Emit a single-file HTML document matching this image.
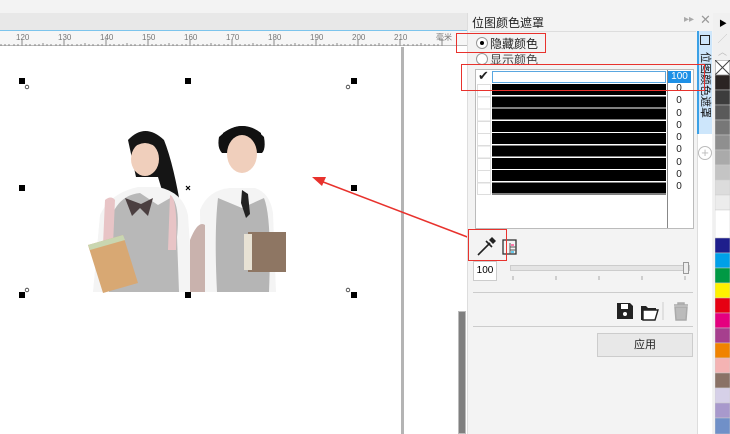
<!DOCTYPE html><html><head><meta charset="utf-8"><style>
*{margin:0;padding:0;box-sizing:border-box}
body{width:730px;height:434px;overflow:hidden;position:relative;background:#fff;font-family:"Liberation Sans","Noto Sans CJK SC",sans-serif}
.a{position:absolute}
.t{font-size:11px;color:#222;white-space:nowrap}
</style></head><body>
<div class="a" style="left:0;top:0;width:730px;height:13px;background:#f3f3f3"></div>
<div class="a" style="left:0;top:13px;width:470px;height:17px;background:#e8e8e8"></div>
<div class="a" style="left:0;top:30px;width:470px;height:1px;background:#7cc4ec"></div>
<div class="a" style="left:0;top:31px;width:470px;height:15px;background:#f6f6f6;border-bottom:1px solid #bbb"></div>
<svg class="a" style="left:0;top:31px" width="470" height="16">
<g font-family="Liberation Sans" font-size="8" fill="#777">
<text x="16" y="9">120</text><text x="58" y="9">130</text><text x="100" y="9">140</text><text x="142" y="9">150</text><text x="184" y="9">160</text><text x="226" y="9">170</text><text x="268" y="9">180</text><text x="310" y="9">190</text><text x="352" y="9">200</text><text x="394" y="9">210</text><text x="436" y="9">毫米</text></g>
<g stroke="#888" stroke-width="1">
<path d="M22 8v7M64 8v7M106 8v7M148 8v7M190 8v7M232 8v7M274 8v7M316 8v7M358 8v7M400 8v7M442 8v7"/>
<path d="M1 13v2M5 13v2M9 13v2M14 13v2M18 13v2M26 13v2M30 13v2M35 13v2M39 13v2M43 12v3M47 13v2M51 13v2M56 13v2M60 13v2M68 13v2M72 13v2M77 13v2M81 13v2M85 12v3M89 13v2M93 13v2M98 13v2M102 13v2M110 13v2M114 13v2M119 13v2M123 13v2M127 12v3M131 13v2M135 13v2M140 13v2M144 13v2M152 13v2M156 13v2M161 13v2M165 13v2M169 12v3M173 13v2M177 13v2M182 13v2M186 13v2M194 13v2M198 13v2M203 13v2M207 13v2M211 12v3M215 13v2M219 13v2M224 13v2M228 13v2M236 13v2M240 13v2M245 13v2M249 13v2M253 12v3M257 13v2M261 13v2M266 13v2M270 13v2M278 13v2M282 13v2M287 13v2M291 13v2M295 12v3M299 13v2M303 13v2M308 13v2M312 13v2M320 13v2M324 13v2M329 13v2M333 13v2M337 12v3M341 13v2M345 13v2M350 13v2M354 13v2M362 13v2M366 13v2M371 13v2M375 13v2M379 12v3M383 13v2M387 13v2M392 13v2M396 13v2M404 13v2M408 13v2M413 13v2M417 13v2M421 12v3M425 13v2M429 13v2M434 13v2M438 13v2"/></g></svg>
<div class="a" style="left:401px;top:47px;width:3px;height:387px;background:#b4b4b4"></div>
<div class="a" style="left:458px;top:311px;width:8px;height:123px;background:#7f7f7f;border:1px solid #bbb"></div>
<svg class="a" style="left:0;top:0" width="400" height="434">
<g fill="#000"><rect x="19" y="78" width="6" height="6"/><rect x="185" y="78" width="6" height="6"/><rect x="351" y="78" width="6" height="6"/><rect x="19" y="185" width="6" height="6"/><rect x="351" y="185" width="6" height="6"/><rect x="19" y="292" width="6" height="6"/><rect x="185" y="292" width="6" height="6"/><rect x="351" y="292" width="6" height="6"/></g>
<g fill="#fff" stroke="#333" stroke-width=".8"><circle cx="27" cy="87" r="1.8"/><circle cx="348" cy="87" r="1.8"/><circle cx="27" cy="290" r="1.8"/><circle cx="348" cy="290" r="1.8"/></g>
<path d="M186 186l4 4M190 186l-4 4" stroke="#000" stroke-width="1.2"/>
<path d="M128 140 q17-18 36 0 q10 25 18 75 l-12 2 -12-40 h-22z" fill="#151515"/>
<path d="M100 215 q10-22 38-28 h20 q25 5 30 28 l5 77 h-100z" fill="#f4f4f4"/>
<path d="M112 215 q8-20 28-22 l18 12 l14-8 q8 10 5 40 l2 55 h-70z" fill="#b8b8b8"/>
<path d="M105 200 q6-5 10 0 l-2 45 h-10z" fill="#e8c4c6"/>
<path d="M170 195 q8 2 6 55 h-8z" fill="#e8c4c6"/>
<ellipse cx="145" cy="159" rx="14" ry="17" fill="#f0cfbc"/>
<path d="M131 150 q14-14 28 0 v-10 q-14-12-28 0z" fill="#151515"/>
<path d="M125 198 l16 6 l12-6 l-5 18 l-8-8 l-8 8z" fill="#4b3f40"/>
<path d="M88 245 l35-10 l15 48 l-35 10z" fill="#d8a873"/>
<path d="M88 245 l35-10 l2 5 l-35 10z" fill="#c9d6b0"/>
<path d="M200 210 q8-20 30-22 h25 q15 5 18 25 l3 79 h-75z" fill="#f4f4f4"/>
<path d="M218 198 l24 10 l22-10 q8 20 5 94 h-52 q-3-60 1-94z" fill="#b5b5b5"/>
<path d="M190 240 q8-20 15-15 v67 h-15z" fill="#c9b2ad"/>
<path d="M242 190 l6 4 l2 20 l-4 4 -5-15z" fill="#222"/>
<path d="M219 137 q23-22 45 0 q2 12-2 16 h-40 q-5-5-3-16z" fill="#111"/>
<ellipse cx="242" cy="154" rx="15" ry="19" fill="#f0cfbc"/>
<path d="M223 142 q20-16 38 0 v-9 q-18-14-38 0z" fill="#111"/>
<path d="M248 232 h38 v40 h-38z" fill="#8e7663"/>
<path d="M244 234 h8 v36 h-8z" fill="#e8e2d4"/>
</svg>
<svg class="a" style="left:300px;top:170px" width="175" height="75"><path d="M170 68 L18 10" stroke="#e8322d" stroke-width="1.5"/><path d="M12 7 l14 0 l-4 9z" fill="#e8322d"/></svg>
<div class="a" style="left:467px;top:13px;width:263px;height:421px;background:#f3f3f3;border-left:1px solid #ddd"></div>
<div class="a t" style="left:472px;top:14px;font-size:12px">位图颜色遮罩</div>
<div class="a" style="left:684px;top:14px;font-size:10px;color:#aaa">▸▸</div>
<div class="a" style="left:700px;top:12px;font-size:13px;color:#999">✕</div>
<div class="a" style="left:470px;top:31px;width:226px;height:1px;background:#ddd"></div>
<div class="a" style="left:476px;top:37px;width:12px;height:12px;border:1px solid #999;border-radius:50%;background:#fff"></div>
<div class="a" style="left:480px;top:41px;width:4px;height:4px;border-radius:50%;background:#000"></div>
<div class="a t" style="left:490px;top:35px;font-size:12px">隐藏颜色</div>
<div class="a" style="left:476px;top:53px;width:12px;height:12px;border:1px solid #999;border-radius:50%;background:#fff"></div>
<div class="a t" style="left:490px;top:51px;font-size:12px;color:#444">显示颜色</div>
<div class="a" style="left:475px;top:69px;width:219px;height:160px;background:#fff;border:1px solid #bbb"></div>
<div class="a" style="left:667px;top:70px;width:1px;height:158px;background:#888"></div>
<div class="a" style="left:492px;top:71px;width:174px;height:12px;border:1px solid #5aa7e0;background:#fff"></div>
<div class="a" style="left:668px;top:71px;width:23px;height:12px;background:#1e90e6;color:#fff;font-size:10px;text-align:center;line-height:12px">100</div>
<div class="a t" style="left:478px;top:68px;font-size:13px">✔</div>
<div class="a" style="left:477px;top:84px;width:14px;height:111px;background:repeating-linear-gradient(#fff 0 11px,#ddd 11px 12.3px);border:1px solid #ddd"></div>
<div class="a" style="left:492px;top:84px;width:174px;height:111px;background:repeating-linear-gradient(#000 0 11px,#fff 11px 12.3px)"></div>
<div class="a" style="left:672px;top:83px;width:14px;font-size:10px;line-height:12.3px;color:#222;text-align:center">0<br>0<br>0<br>0<br>0<br>0<br>0<br>0<br>0</div>
<svg class="a" style="left:474px;top:235px" width="50" height="24"><path d="M4 20 l12-12 M12 6 l6 6" stroke="#222" stroke-width="1.6" fill="none"/><path d="M15 5 l3-3 l4 4 l-3 3z" fill="#222"/>
<rect x="29" y="5" width="13" height="14" fill="none" stroke="#333" stroke-width="1.3"/><path d="M36 8v11M36 12h6M36 15h6" stroke="#555"/><rect x="37" y="9" width="3" height="2" fill="#f7a"/><rect x="37" y="16" width="3" height="2" fill="#6ce"/></svg>
<div class="a" style="left:473px;top:261px;width:24px;height:20px;background:#fff;border:1px solid #ccc;font-size:10px;text-align:center;line-height:18px">100</div>
<div class="a" style="left:510px;top:265px;width:180px;height:6px;background:#e4e4e4;border:1px solid #ccc"></div>
<div class="a" style="left:683px;top:262px;width:6px;height:12px;background:#eee;border:1px solid #999"></div>
<svg class="a" style="left:510px;top:274px" width="185" height="8"><path d="M3 2v4M46 2v4M89 2v4M132 2v4M175 2v4" stroke="#aaa"/></svg>
<div class="a" style="left:473px;top:292px;width:220px;height:1px;background:#ccc"></div>
<svg class="a" style="left:614px;top:300px" width="80" height="22"><path d="M3 3h13l3 3v13h-16z" fill="#222"/><rect x="7" y="4" width="7" height="5" fill="#fff"/><circle cx="11" cy="14" r="2" fill="#fff"/>
<path d="M27 6h5l2 2h8v2h-12l-3 10z M27 20l3-10h14l-3 10z" fill="#222"/><path d="M29 10h15l-3 10h-12z" fill="#fff" stroke="#222" stroke-width="1.4"/>
<path d="M49 2v18" stroke="#ccc"/><path d="M60 5h14M64 5v-2h6v2M61 7h12l-1 13h-10z" stroke="#aaa" stroke-width="1.5" fill="#bbb"/></svg>
<div class="a" style="left:473px;top:326px;width:220px;height:1px;background:#ccc"></div>
<div class="a" style="left:597px;top:333px;width:96px;height:24px;background:#e8e8e8;border:1px solid #ccc;font-size:11px;text-align:center;line-height:22px;color:#222">应用</div>
<div class="a" style="left:697px;top:31px;width:15px;height:403px;background:#fff;border-left:1px solid #ddd"></div>
<div class="a" style="left:697px;top:31px;width:15px;height:103px;background:#cde6fb;border-left:2px solid #3ba0e6"></div>
<div class="a" style="left:700px;top:35px;width:10px;height:10px;border:1.5px solid #222"></div>
<div class="a" style="left:698px;top:52px;height:70px;writing-mode:vertical-rl;text-orientation:sideways;font-size:11px;line-height:13px;color:#111">位图颜色遮罩</div>
<div class="a" style="left:698px;top:146px;width:14px;height:14px;border:1px solid #bbb;border-radius:50%;color:#bbb;font-size:13px;line-height:12px;text-align:center">+</div>
<div class="a" style="left:713px;top:13px;width:17px;height:421px;background:#f0f0f0"></div>
<div class="a" style="left:719px;top:18px;font-size:8px">▶</div>
<div class="a" style="left:718px;top:32px;font-size:9px;color:#bbb">╱</div>
<div class="a" style="left:718px;top:45px;font-size:9px;color:#bbb">︿</div>
<svg class="a" style="left:715px;top:60px" width="15" height="374">
<rect x="0" y="0" width="15" height="15" fill="#fff" stroke="#888"/><path d="M0 0L15 15M15 0L0 15" stroke="#444"/>
<g stroke="#ccc" stroke-width=".5">
<rect y="15" width="15" height="15" fill="#2b2422"/><rect y="30" width="15" height="15" fill="#3d3d3d"/><rect y="45" width="15" height="15" fill="#5a5a5a"/><rect y="60" width="15" height="15" fill="#777"/><rect y="75" width="15" height="15" fill="#8f8f8f"/><rect y="90" width="15" height="15" fill="#aaa"/><rect y="105" width="15" height="15" fill="#c4c4c4"/><rect y="120" width="15" height="15" fill="#dcdcdc"/><rect y="135" width="15" height="15" fill="#ececec"/><rect y="150" width="15" height="28" fill="#fff"/>
<rect y="178" width="15" height="15" fill="#1e1e8c"/><rect y="193" width="15" height="15" fill="#00a0e9"/><rect y="208" width="15" height="15" fill="#009944"/><rect y="223" width="15" height="15" fill="#fff100"/><rect y="238" width="15" height="15" fill="#e60012"/><rect y="253" width="15" height="15" fill="#e4007f"/><rect y="268" width="15" height="15" fill="#a63f8e"/><rect y="283" width="15" height="15" fill="#f08300"/><rect y="298" width="15" height="15" fill="#f4b3b3"/><rect y="313" width="15" height="15" fill="#8a7266"/><rect y="328" width="15" height="15" fill="#d6d0e8"/><rect y="343" width="15" height="15" fill="#a899cc"/><rect y="358" width="15" height="16" fill="#7090c8"/></g></svg>
<div class="a" style="left:456px;top:33px;width:90px;height:20px;border:1.5px solid #e8322d"></div>
<div class="a" style="left:461px;top:64px;width:244px;height:27px;border:1.5px solid #e8322d"></div>
<div class="a" style="left:468px;top:229px;width:39px;height:32px;border:1.5px solid #e8322d"></div>
</body></html>
